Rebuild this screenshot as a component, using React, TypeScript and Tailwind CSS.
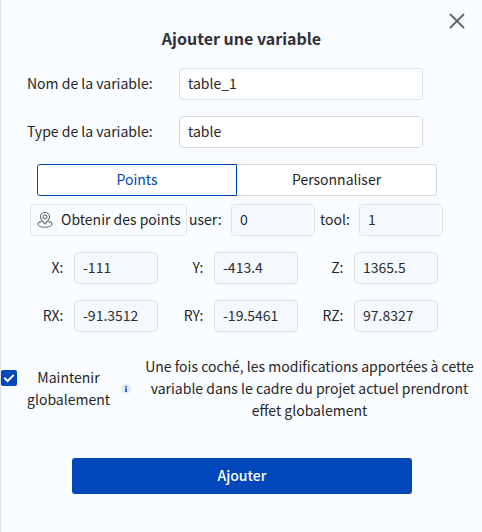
import React from "react";

const labelClass = "shrink-0 whitespace-nowrap pb-0.5";
const readOnlyClass =
  "flex h-8 w-[84px] shrink-0 items-center rounded border border-[#dfe3e8] bg-[#f5f8fc] px-2 pb-[3px] text-[#2b2d33]";

const coordinates = [
  [
    { label: "X:", value: "-111" },
    { label: "Y:", value: "-413.4" },
    { label: "Z:", value: "1365.5" },
  ],
  [
    { label: "RX:", value: "-91.3512" },
    { label: "RY:", value: "-19.5461" },
    { label: "RZ:", value: "97.8327" },
  ],
];

function LocationIcon() {
  return (
    <svg className="h-4 w-4 shrink-0" viewBox="0 0 16 16" fill="none" stroke="#686b79" strokeWidth="1.1" strokeLinecap="round" strokeLinejoin="round">
      <path d="M8 12C5.8 9.4 3.4 7.3 3.4 4.9a4.6 4.4 0 0 1 9.2 0C12.6 7.3 10.2 9.4 8 12Z" />
      <circle cx="8" cy="4.9" r="1.9" />
      <path d="M4.2 9.6C2.2 10.1 1 10.9 1 12c0 1.8 3 3.3 7 3.3s7-1.5 7-3.3c0-1.1-1.2-1.9-3.2-2.4" />
    </svg>
  );
}

export default function App() {
  return (
    <div className="flex h-[532px] w-[482px] flex-col overflow-hidden border-l border-[#dcdfe4] bg-[#fafdff] font-['Noto_Sans_CJK_SC',sans-serif] text-[14px] leading-[22px] text-[#262628]">
      <header className="flex h-[68px] shrink-0 flex-col">
        <div className="flex h-[27px] justify-end pt-[13px] pr-[17px]">
          <button aria-label="Fermer" className="h-4 w-4">
            <svg className="h-4 w-4" viewBox="0 0 16 16" fill="none" stroke="#626471" strokeWidth="1.8" strokeLinecap="round">
              <path d="M1.5 1.5 14.5 14.5M14.5 1.5 1.5 14.5" />
            </svg>
          </button>
        </div>
        <h1 className="text-center text-[16px] leading-[22px] font-bold text-[#303038]">Ajouter une variable</h1>
      </header>

      <div className="flex shrink-0 flex-col gap-4">
        <div className="flex h-8 items-center pl-[26px]">
          <label className="w-[152px] shrink-0 whitespace-nowrap pb-0.5">Nom de la variable:</label>
          <div className="flex h-8 w-[244px] items-center rounded border border-[#dfe2e7] bg-white px-2 pb-0.5">table_1</div>
        </div>
        <div className="flex h-8 items-center pl-[26px]">
          <label className="w-[152px] shrink-0 whitespace-nowrap pb-0.5">Type de la variable:</label>
          <div className="flex h-8 w-[244px] items-center rounded border border-[#d6d8db] bg-white px-2 pb-0.5">table</div>
        </div>
        <div className="ml-9 flex h-8 w-[400px]">
          <button className="w-[200px] rounded-l-[3px] border border-[#0047bb] bg-white pb-0.5 text-[#0047bb]">Points</button>
          <button className="w-[200px] rounded-r-[3px] border border-l-0 border-[#d9d9dc] bg-white pb-0.5">Personnaliser</button>
        </div>
      </div>

      <div className="mt-2 flex h-8 shrink-0 items-center pl-[29px]">
        <button className="flex h-8 w-[157px] items-center gap-2 rounded-[3px] border border-[#dfe3e8] pl-[6px]">
          <LocationIcon />
          <span className="whitespace-nowrap pb-0.5">Obtenir des points</span>
        </button>
        <label className="ml-[2px] w-[42px] shrink-0 whitespace-nowrap pb-0.5">user:</label>
        <div className={readOnlyClass}>0</div>
        <label className="ml-[5px] w-[39px] shrink-0 whitespace-nowrap pb-0.5">tool:</label>
        <div className={readOnlyClass}>1</div>
      </div>

      <div className="mt-4 flex shrink-0 flex-col gap-4 pl-[17px]">
        {coordinates.map((row, index) => (
          <div key={index} className="flex h-8">
            {row.map((field) => (
              <div key={field.label} className="flex w-[140px] items-center justify-end gap-[10.5px]">
                <label className={labelClass}>{field.label}</label>
                <div className={readOnlyClass}>{field.value}</div>
              </div>
            ))}
          </div>
        ))}
      </div>

      <div className="mt-6 flex h-[66px] shrink-0 items-center text-center">
        <div role="checkbox" aria-checked="true" className="-mt-[22px] flex h-4 w-4 shrink-0 items-center justify-center rounded-[2px] bg-[#0047bb]">
          <svg className="h-4 w-4" viewBox="0 0 16 16" fill="none" stroke="white" strokeWidth="2">
            <path d="m3.2 7.8 3.4 3.2 6.2-6.1" />
          </svg>
        </div>
        <div className="ml-[10px] w-[83px] shrink-0 pb-0.5">Maintenir globalement</div>
        <svg className="ml-[11px] h-[10px] w-[10px] shrink-0" viewBox="0 0 10 10">
          <circle cx="5" cy="5" r="5" fill="#e2e8f1" />
          <path d="M4 2h2v1.4H4zM4 4.2h2V8H4z" fill="#2e66c7" />
        </svg>
        <p className="ml-[5px] w-[347px] shrink-0 pb-0.5">
          Une fois coché, les modifications apportées à cette
          <br />
          variable dans le cadre du projet actuel prendront
          <br />
          effet globalement
        </p>
      </div>

      <button className="mt-9 ml-[71px] h-9 w-[340px] shrink-0 rounded-[3px] bg-[#0047bb] pb-0.5 font-medium text-white">Ajouter</button>
    </div>
  );
}
